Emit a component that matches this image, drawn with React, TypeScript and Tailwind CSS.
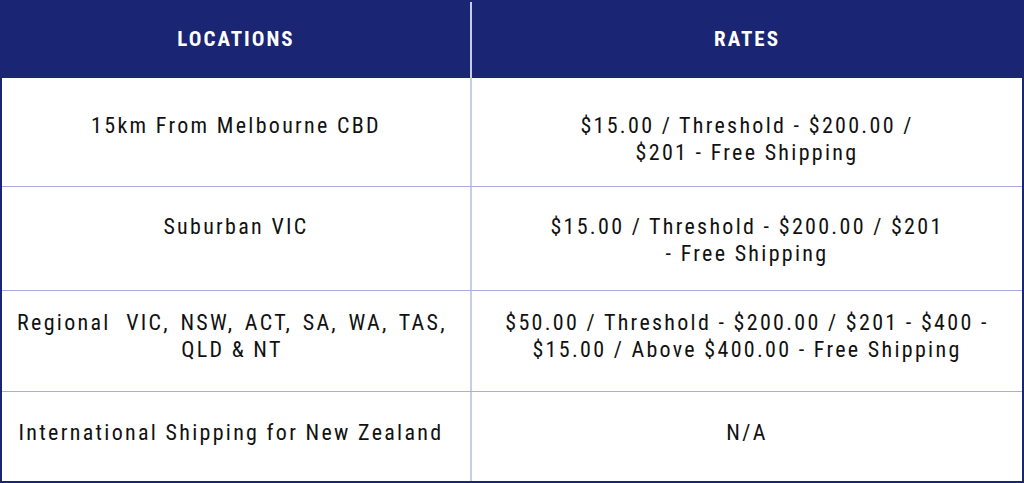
const rows = [
  {
    h: 'h-[108px]',
    pt: 'pt-[34px]',
    locPad: '',
    loc: <>15km From Melbourne CBD</>,
    rate: (
      <>
        $15.00 / Threshold - $200.00 /<br />$201 - Free Shipping
      </>
    ),
  },
  {
    h: 'h-[104px] border-t border-[#a7aedb]',
    pt: 'pt-[26px]',
    locPad: '',
    loc: <>Suburban VIC</>,
    rate: (
      <>
        $15.00 / Threshold - $200.00 / $201<br />- Free Shipping
      </>
    ),
  },
  {
    h: 'h-[101px] border-t border-[#a7aedb]',
    pt: 'pt-[18px]',
    locPad: 'pr-[8px]',
    loc: (
      <>
        <span className="[word-spacing:3.1px]">
          Regional<span className="ml-[5px]"> </span>VIC, NSW, ACT, SA, WA, TAS,
        </span>
        <br />QLD &amp; NT
      </>
    ),
    rate: (
      <>
        $50.00 / Threshold - $200.00 / $201 - $400 -<br />$15.00 / Above $400.00 - Free Shipping
      </>
    ),
  },
  {
    h: 'h-[90px] border-t border-[#a7aedb]',
    pt: 'pt-[27px]',
    locPad: 'pr-[10px]',
    loc: <>International Shipping for New Zealand</>,
    rate: <>N/A</>,
  },
]

export default function App() {
  return (
    <div className="w-[1024px] h-[483px] bg-white font-['Roboto',sans-serif] font-stretch-condensed">
      <div className="border-x-2 border-b-2 border-[#1a2574]">
        {/* header */}
        <div className="grid grid-cols-[470px_1fr] h-[78px] bg-[#1a2574] text-white font-bold text-[21px] tracking-[2px] uppercase">
          <div className="flex items-center justify-center border-r-2 border-[#c9cce6] mt-[2px] pb-[1px]">
            Locations
          </div>
          <div className="flex items-center justify-center pt-[1px]">Rates</div>
        </div>

        {rows.map((r, i) => (
          <div key={i} className={`grid grid-cols-[470px_1fr] ${r.h}`}>
            <div className={`border-r-2 border-[#c9cce6] text-center ${r.pt} ${r.locPad}`}>
              <p className="text-[22px] leading-[27px] tracking-[2.3px] text-[#111]">{r.loc}</p>
            </div>
            <div className={`text-center ${r.pt}`}>
              <p className="text-[22px] leading-[27px] tracking-[2.3px] text-[#111]">{r.rate}</p>
            </div>
          </div>
        ))}
      </div>
    </div>
  )
}
